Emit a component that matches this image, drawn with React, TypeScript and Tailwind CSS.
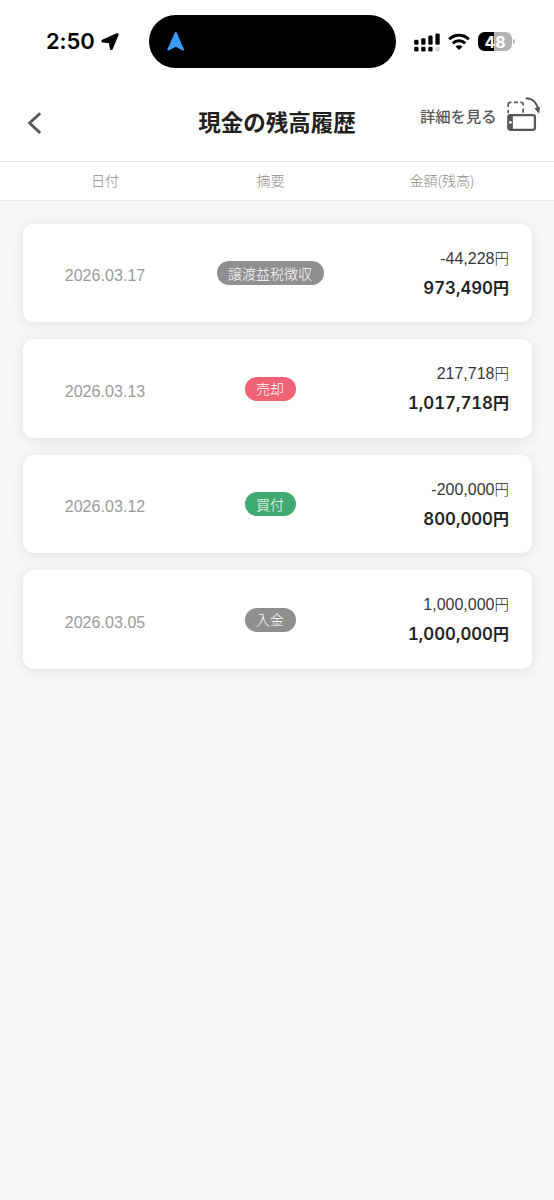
import clsx from 'clsx';

type Entry = {
  date: string;
  label: string;
  tone: 'gray' | 'red' | 'green';
  amount: string;
  balance: string;
};

const entries: Entry[] = [
  { date: '2026.03.17', label: '譲渡益税徴収', tone: 'gray', amount: '-44,228', balance: '973,490' },
  { date: '2026.03.13', label: '売却', tone: 'red', amount: '217,718', balance: '1,017,718' },
  { date: '2026.03.12', label: '買付', tone: 'green', amount: '-200,000', balance: '800,000' },
  { date: '2026.03.05', label: '入金', tone: 'gray', amount: '1,000,000', balance: '1,000,000' },
];

const tones = {
  gray: 'bg-[#8f8f8f]',
  red: 'bg-[#f06275]',
  green: 'bg-[#3fab71]',
};

function StatusBar() {
  return (
    <div className="flex h-[83px] items-start pt-[15px] font-['Inter','Liberation_Sans',sans-serif]">
      <div className="flex h-[53px] w-[149px] items-center pl-[46px]">
        <span className="w-[49px] whitespace-nowrap text-[22px] font-semibold tracking-[-0.1px] text-black">2:50</span>
        <svg className="ml-[6px]" width="18" height="18" viewBox="0 0 18 18">
          <path d="M16.2 1.6 10.3 15.6 9.2 9.4 8.6 8.8 1.8 8.1z" fill="#000" stroke="#000" strokeWidth="2.8" strokeLinejoin="round" />
        </svg>
      </div>

      {/* Dynamic island */}
      <div className="flex h-[53px] w-[247px] items-center rounded-full bg-black pl-[17px]">
        <svg width="20" height="22" viewBox="0 0 20 22">
          <path d="M9.8 2 17 18.6 9.8 14.6 2.3 18.6z" fill="#3a9bfb" stroke="#3a9bfb" strokeWidth="2" strokeLinejoin="round" />
        </svg>
      </div>

      <div className="flex h-[53px] items-center pl-[18px]">
        <svg width="26" height="20" viewBox="0 0 26 20" fill="#000">
          <rect x="0.2" y="7.8" width="4.3" height="5" rx="1.3" />
          <rect x="7.2" y="6.2" width="4.3" height="6.6" rx="1.3" />
          <rect x="14.3" y="3.6" width="4.3" height="9.2" rx="1.3" />
          <rect x="21.4" y="1.4" width="4.3" height="11.4" rx="1.3" />
          <rect x="0.2" y="14.8" width="4.3" height="4.8" rx="1.3" />
          <rect x="7.2" y="14.8" width="4.3" height="4.8" rx="1.3" />
          <rect x="14.3" y="14.8" width="4.3" height="4.8" rx="1.3" />
          <rect x="21.4" y="14.8" width="4.3" height="4.8" rx="1.3" fill="#d4d4d4" />
        </svg>
        <svg className="ml-[8px]" width="22" height="18" viewBox="0 0 22 18" fill="none" stroke="#000" strokeWidth="3">
          <path d="M1.2 6.3a14 14 0 0 1 19.6 0" />
          <path d="M4.8 10.4a8.8 8.8 0 0 1 12.4 0" />
          <path d="M11 17 7.5 13.6a4.9 4.9 0 0 1 7 0z" fill="#000" stroke="none" />
        </svg>
        <div className="ml-[8px] flex h-[19px] w-[34px] items-center justify-center rounded-[6.5px] bg-linear-to-r from-black from-48% to-[#b3b3b3] to-48% text-[16px] font-bold leading-none text-white">
          48
        </div>
        <div className="ml-[1px] h-[5px] w-[2px] rounded-r-full bg-[#b3b3b3]" />
      </div>
    </div>
  );
}

function RotateIcon() {
  return (
    <svg width="36" height="38" viewBox="0 0 36 38" fill="none" stroke="#595757">
      <path d="M2.2 16.2V13M2.2 10V7.4Q2.2 5.3 4.3 5.3H5.5M7.9 5.3h4M14.3 5.3h.8Q17.2 5.3 17.2 7.4V8.6M17.2 11.4v4.4" strokeWidth="1.7" />
      <path d="M19.7 1.2C26.7 1.2 31.2 6 32.2 13.5" strokeWidth="1.9" />
      <path d="M28.4 11.3 33 16.8 34.2 9.8z" fill="#595757" stroke="none" />
      <rect x="2.3" y="18.1" width="26.6" height="14.7" rx="2" strokeWidth="2.3" />
      <path d="M2.3 18.1h4.6v14.7H2.3z" fill="#595757" stroke="none" />
      <circle cx="4.4" cy="25.4" r="1.4" fill="#fff" stroke="none" />
    </svg>
  );
}

function Header() {
  return (
    <header className="grid h-[79px] grid-cols-[198px_158px_198px] border-b border-[#e6e6e6]">
      <button className="flex h-[79px] items-center pl-[26px]">
        <svg width="16" height="24" viewBox="0 0 16 24" fill="none" stroke="#595757" strokeWidth="2.9">
          <path d="M14.2 2.2 3.6 12l10.6 10" />
        </svg>
      </button>
      <h1 className="flex h-[77px] items-center justify-center whitespace-nowrap text-[22.5px] font-bold leading-none text-[#231f20]">
        現金の残高履歴
      </h1>
      <div className="flex items-start pt-[13px] pl-[64px]">
        <span className="w-[79px] whitespace-nowrap pt-[9px] text-[15.3px] font-medium leading-[20px] text-[#595757]">詳細を見る</span>
        <div className="ml-[7px] mt-[1px] shrink-0">
          <RotateIcon />
        </div>
      </div>
    </header>
  );
}

function EntryCard({ entry }: { entry: Entry }) {
  return (
    <li className="grid h-[98.5px] grid-cols-[165px_165px_1fr] items-center rounded-[11px] bg-white pr-[22.5px] shadow-[0_2px_13px_rgba(0,0,0,0.1)]">
      <span className="pt-[6px] text-center font-['Liberation_Sans'] text-[16px] tracking-[0.05px] text-[#9a9a9a]">{entry.date}</span>
      <div className="flex justify-center">
        <span className={clsx('flex h-6 items-center rounded-full px-[11.5px] pb-px text-[14px] font-light leading-none text-white', tones[entry.tone])}>
          {entry.label}
        </span>
      </div>
      <div className="pb-px text-right text-[#231f20]">
        <p className="font-light leading-[29px]">
          <span className="font-['Liberation_Sans'] text-[16px] text-[#3a3637]">{entry.amount}</span>
          <span className="text-[14.5px]">円</span>
        </p>
        <p className="font-semibold leading-[29px]">
          <span className="font-['Inter'] text-[16.8px] tabular-nums">{entry.balance}</span>
          <span className="text-[16px] font-bold">円</span>
        </p>
      </div>
    </li>
  );
}

export default function App() {
  return (
    <div className="flex min-h-[1200px] w-[554px] flex-col bg-[#f7f7f7] font-['Noto_Sans_CJK_JP',sans-serif]">
      <div className="bg-white">
        <StatusBar />
        <Header />
        <div className="grid h-[39px] grid-cols-[188px_165px_1fr] items-center border-b border-[#e9e9e9] pb-[1px] text-center text-[14px] font-light text-[#8a8a8a]">
          <span className="pl-[22px]">日付</span>
          <span>摘要</span>
          <span className="pr-[23px]">金額(残高)</span>
        </div>
      </div>
      <ul className="flex flex-col gap-[17px] px-[22.5px] pt-[22.9px]">
        {entries.map(entry => (
          <EntryCard key={entry.date} entry={entry} />
        ))}
      </ul>
    </div>
  );
}
